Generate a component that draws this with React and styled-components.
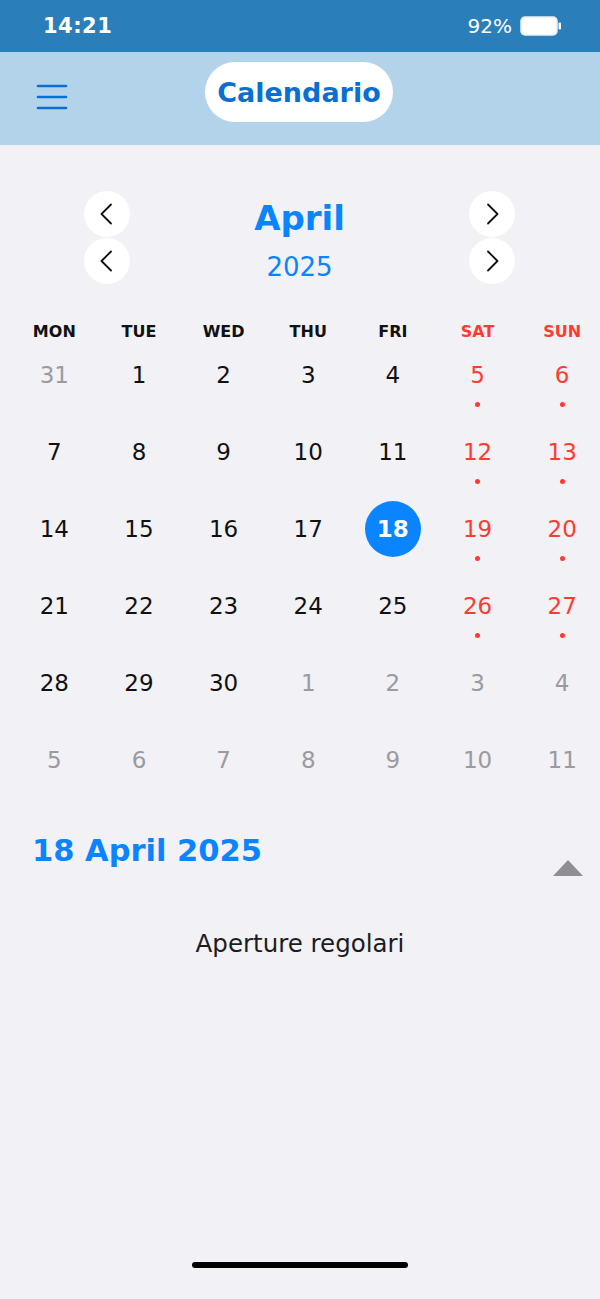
import React from "react";
import styled, { createGlobalStyle } from "styled-components";

const BLUE = "#0a84ff";
const RED = "#ff3b30";
const GRAY = "#9a9aa0";

const GlobalStyle = createGlobalStyle`
  html, body {
    margin: 0;
    padding: 0;
    background: #f1f1f6;
    font-family: "DejaVu Sans", "Liberation Sans", sans-serif;
  }
  * { box-sizing: border-box; }
`;

const Screen = styled.div`
  width: 600px;
  height: 1299px;
  background: #f1f1f6;
  display: flex;
  flex-direction: column;
  position: relative;
  overflow: hidden;
`;

const StatusBar = styled.div`
  height: 52px;
  background: #2a7fba;
  color: #fff;
  display: flex;
  align-items: center;
  justify-content: space-between;
  padding: 0 38px 0 43px;
  font-size: 20px;
`;

const Clock = styled.span`
  font-weight: bold;
  font-size: 21px;
  letter-spacing: 0.5px;
`;

const StatusRight = styled.div`
  display: flex;
  align-items: center;
  gap: 8px;
`;

const Header = styled.div`
  height: 93px;
  background: #b3d3ea;
  display: flex;
  align-items: flex-start;
  position: relative;
  padding-top: 10px;
`;

const MenuButton = styled.button`
  background: none;
  border: none;
  padding: 0;
  position: absolute;
  left: 36px;
  top: 31px;
  display: flex;
`;

const TitlePill = styled.div`
  margin: 0 auto;
  height: 60px;
  padding: 0 12px;
  background: #fff;
  border-radius: 30px;
  display: flex;
  align-items: center;
  font-weight: bold;
  font-size: 27px;
  color: #0a6fd2;
  transform: translateX(-1px);
`;

const MonthNav = styled.div`
  display: grid;
  grid-template-columns: 46px 1fr 46px;
  row-gap: 1px;
  padding: 46px 85px 0 84px;
  align-items: center;
`;

const RoundButton = styled.button`
  width: 46px;
  height: 46px;
  border-radius: 50%;
  border: none;
  background: #fff;
  display: flex;
  align-items: center;
  justify-content: center;
  padding: 0;
`;

const MonthLabel = styled.div`
  text-align: center;
  color: ${BLUE};
  font-weight: ${({ $big }) => ($big ? "bold" : "normal")};
  font-size: ${({ $big }) => ($big ? "34px" : "26px")};
  transform: translateY(${({ $big }) => ($big ? "4px" : "6px")});
`;

const Grid = styled.div`
  display: grid;
  grid-template-columns: repeat(7, 84.65px);
  margin-left: 12px;
  margin-top: 37px;
`;

const WeekDay = styled.div`
  text-align: center;
  font-weight: bold;
  font-size: 16px;
  color: ${({ $weekend }) => ($weekend ? RED : "#111")};
  height: 21px;
  line-height: 21px;
`;

const DayCell = styled.div`
  height: 77px;
  display: flex;
  flex-direction: column;
  align-items: center;
  padding-top: 8px;
`;

const DayNumber = styled.div`
  width: 56px;
  height: 56px;
  border-radius: 50%;
  display: flex;
  align-items: center;
  justify-content: center;
  font-size: 23px;
  background: ${({ $selected }) => ($selected ? BLUE : "transparent")};
  color: ${({ $selected, $weekend, $muted }) =>
    $selected ? "#fff" : $muted ? GRAY : $weekend ? RED : "#111"};
  font-weight: ${({ $selected }) => ($selected ? "bold" : "normal")};
  margin-top: -3px;
`;

const Dot = styled.div`
  width: 5px;
  height: 5px;
  border-radius: 50%;
  background: ${RED};
  margin-top: -1px;
`;

const DetailHeader = styled.div`
  display: flex;
  justify-content: space-between;
  align-items: flex-start;
  padding: 29px 17px 0 32px;
`;

const DetailDate = styled.div`
  color: ${BLUE};
  font-weight: bold;
  font-size: 30.5px;
`;

const Caret = styled.div`
  width: 0;
  height: 0;
  border-left: 15px solid transparent;
  border-right: 15px solid transparent;
  border-bottom: 16px solid #8e8e93;
  margin-top: 27px;
`;

const Note = styled.div`
  text-align: center;
  font-size: 24.5px;
  color: #1c1c1e;
  margin-top: 53px;
`;

const HomeIndicator = styled.div`
  position: absolute;
  left: 192px;
  bottom: 31px;
  width: 216px;
  height: 6px;
  border-radius: 3px;
  background: #000;
`;

const Chevron = ({ dir }) => (
  <svg width="24" height="24" viewBox="0 0 24 24" fill="none" stroke="#111" strokeWidth="1.8" strokeLinecap="round" strokeLinejoin="round">
    {dir === "left" ? <path d="M16 2.5 L6.5 12 L16 21.5" /> : <path d="M8 2.5 L17.5 12 L8 21.5" />}
  </svg>
);

const WEEKDAYS = ["MON", "TUE", "WED", "THU", "FRI", "SAT", "SUN"];

const buildDays = () => {
  const days = [{ n: 31, muted: true }];
  for (let i = 1; i <= 30; i++) days.push({ n: i });
  for (let i = 1; i <= 11; i++) days.push({ n: i, muted: true });
  return days;
};

export default function App() {
  const days = buildDays();
  return (
    <Screen>
      <GlobalStyle />
      <StatusBar>
        <Clock>14:21</Clock>
        <StatusRight>
          <span>92%</span>
          <svg width="42" height="20" viewBox="0 0 42 20">
            <rect x="1" y="1" width="36" height="18" rx="4" fill="#fff" stroke="#e6f0f8" strokeWidth="1.5" />
            <rect x="38.5" y="6.5" width="2.5" height="7" rx="1" fill="#fff" />
          </svg>
        </StatusRight>
      </StatusBar>
      <Header>
        <MenuButton aria-label="menu">
          <svg width="32" height="28" viewBox="0 0 32 28">
            <g stroke="#0a6fd2" strokeWidth="2.6" strokeLinecap="round">
              <line x1="2" y1="3" x2="30" y2="3" />
              <line x1="2" y1="14" x2="30" y2="14" />
              <line x1="2" y1="25" x2="30" y2="25" />
            </g>
          </svg>
        </MenuButton>
        <TitlePill>Calendario</TitlePill>
      </Header>

      <MonthNav>
        <RoundButton><Chevron dir="left" /></RoundButton>
        <MonthLabel $big>April</MonthLabel>
        <RoundButton><Chevron dir="right" /></RoundButton>
        <RoundButton><Chevron dir="left" /></RoundButton>
        <MonthLabel>2025</MonthLabel>
        <RoundButton><Chevron dir="right" /></RoundButton>
      </MonthNav>

      <Grid>
        {WEEKDAYS.map((d, i) => (
          <WeekDay key={d} $weekend={i >= 5}>{d}</WeekDay>
        ))}
        {days.map((d, i) => {
          const weekend = i % 7 >= 5;
          const selected = !d.muted && d.n === 18;
          const dot = weekend && !d.muted && d.n <= 27;
          return (
            <DayCell key={i}>
              <DayNumber $weekend={weekend} $muted={d.muted} $selected={selected}>
                {d.n}
              </DayNumber>
              {dot && <Dot />}
            </DayCell>
          );
        })}
      </Grid>

      <DetailHeader>
        <DetailDate>18 April 2025</DetailDate>
        <Caret />
      </DetailHeader>
      <Note>Aperture regolari</Note>

      <HomeIndicator />
    </Screen>
  );
}
